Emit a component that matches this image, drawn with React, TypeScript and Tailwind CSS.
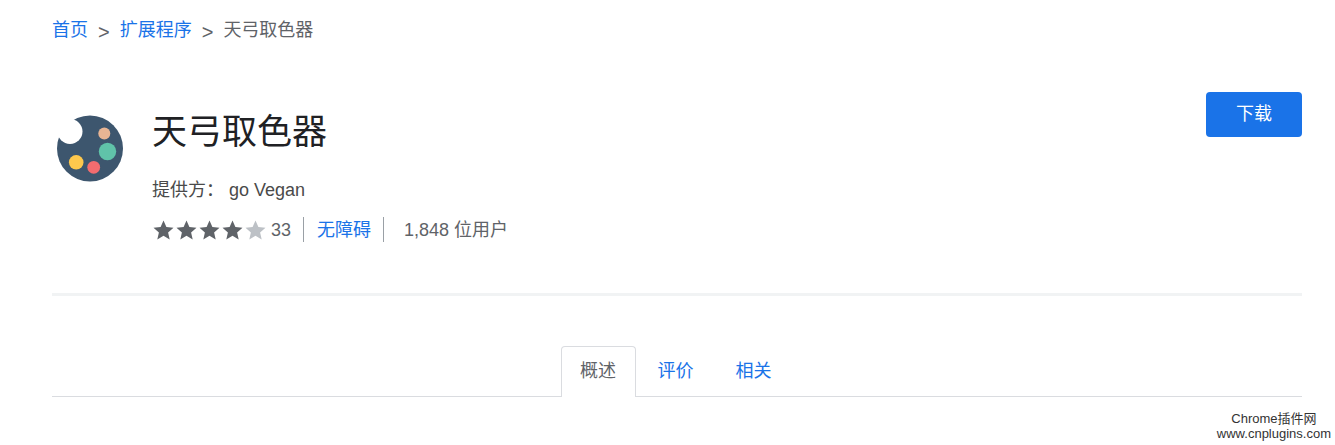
const font = { fontFamily: '"Liberation Sans", "Noto Sans CJK SC", sans-serif' };

function Star({ color }: { color: string }) {
  return (
    <svg width="23" height="24" viewBox="0 0 23 24" className="block">
      <path
        d="M11.5 2.5l2.9 6.6 7.1.7-5.4 4.7 1.6 7-6.2-3.7-6.2 3.7 1.6-7L1.5 9.8l7.1-.7z"
        fill={color}
      />
    </svg>
  );
}

function Logo() {
  return (
    <svg width="66" height="67" viewBox="0 0 66 67" className="block">
      <circle cx="33" cy="33.5" r="33" fill="#3d566e" />
      <circle cx="13" cy="16.5" r="12.5" fill="#ffffff" />
      <circle cx="47.3" cy="18.5" r="6" fill="#e8b594" />
      <circle cx="50.5" cy="36.5" r="8.7" fill="#60c3a9" />
      <circle cx="19.2" cy="47.3" r="7.3" fill="#fec84d" />
      <circle cx="36.7" cy="52.3" r="6.4" fill="#f36c6f" />
    </svg>
  );
}

export default function App() {
  return (
    <div style={font} className="relative h-[445px] w-[1335px] overflow-hidden bg-white pl-[52px] pr-[33px]">
      <nav className="flex h-[60px] items-center text-[18px] leading-[24px] text-[#5f6368]">
        <a className="text-[#1a73e8]">首页</a>
        <span className="mx-[10px] mt-[4px] text-[20px]">&gt;</span>
        <a className="text-[#1a73e8]">扩展程序</a>
        <span className="mx-[10px] mt-[4px] text-[20px]">&gt;</span>
        <span>天弓取色器</span>
      </nav>

      <section className="mt-[32px] flex h-[204px] items-start justify-between border-b-[3px] border-[#f1f3f4]">
        <div className="flex">
          <div className="ml-[5px] mt-[23px] w-[95px]">
            <Logo />
          </div>
          <div className="flex flex-col">
            <h1 className="mt-[16px] text-[35px] font-normal leading-[48px] text-[#202124]">天弓取色器</h1>
            <p className="mt-[22px] text-[18px] leading-[24px] text-[#4a4a4a]">
              提供方：<span className="ml-[5px]">go Vegan</span>
            </p>
            <div className="mt-[15px] flex h-[25px] items-center text-[18px] leading-[24px] text-[#5f6368]">
              <div className="flex">
                <Star color="#5f6368" />
                <Star color="#5f6368" />
                <Star color="#5f6368" />
                <Star color="#5f6368" />
                <Star color="#bdc1c6" />
              </div>
              <span className="ml-[4px]">33</span>
              <span className="ml-[12px] h-[25px] w-px bg-[#9aa0a6]" />
              <a className="ml-[13px] text-[#1a73e8]">无障碍</a>
              <span className="ml-[12px] h-[25px] w-px bg-[#9aa0a6]" />
              <span className="ml-[20px]">1,848 位用户</span>
            </div>
          </div>
        </div>
        <button className="flex h-[45px] w-[96px] items-center justify-center rounded-[4px] bg-[#1a73e8] text-[18px] text-white">
          下载
        </button>
      </section>

      <div className="mt-[50px] flex h-[51px] items-start justify-center border-b border-[#dadce0] pr-[2px]">
        <div className="flex h-[51px] w-[75px] items-center justify-center rounded-t-[4px] border border-b-0 border-[#dadce0] bg-white pb-[2px] text-[18px] text-[#5f6368]">
          概述
        </div>
        <div className="ml-[2px] flex h-[50px] w-[76px] items-center justify-center text-[18px] text-[#1a73e8]">评价</div>
        <div className="ml-[2px] flex h-[50px] w-[76px] items-center justify-center text-[18px] text-[#1a73e8]">相关</div>
      </div>

      <div className="absolute bottom-[4px] right-[4px] text-center text-[13px] leading-[15px] text-[#333333]">
        <div>Chrome插件网</div>
        <div>www.cnplugins.com</div>
      </div>
    </div>
  );
}
